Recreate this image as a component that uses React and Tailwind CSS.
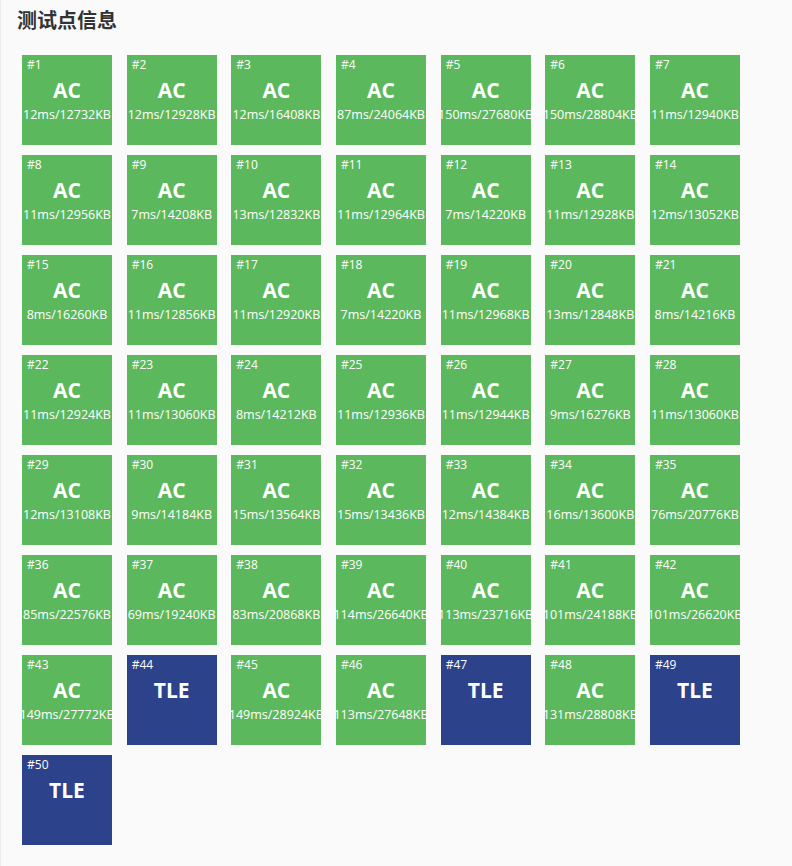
import React from 'react';

const tests = [
  ['AC', '12ms/12732KB'], ['AC', '12ms/12928KB'], ['AC', '12ms/16408KB'], ['AC', '87ms/24064KB'],
  ['AC', '150ms/27680KB'], ['AC', '150ms/28804KB'], ['AC', '11ms/12940KB'],
  ['AC', '11ms/12956KB'], ['AC', '7ms/14208KB'], ['AC', '13ms/12832KB'], ['AC', '11ms/12964KB'],
  ['AC', '7ms/14220KB'], ['AC', '11ms/12928KB'], ['AC', '12ms/13052KB'],
  ['AC', '8ms/16260KB'], ['AC', '11ms/12856KB'], ['AC', '11ms/12920KB'], ['AC', '7ms/14220KB'],
  ['AC', '11ms/12968KB'], ['AC', '13ms/12848KB'], ['AC', '8ms/14216KB'],
  ['AC', '11ms/12924KB'], ['AC', '11ms/13060KB'], ['AC', '8ms/14212KB'], ['AC', '11ms/12936KB'],
  ['AC', '11ms/12944KB'], ['AC', '9ms/16276KB'], ['AC', '11ms/13060KB'],
  ['AC', '12ms/13108KB'], ['AC', '9ms/14184KB'], ['AC', '15ms/13564KB'], ['AC', '15ms/13436KB'],
  ['AC', '12ms/14384KB'], ['AC', '16ms/13600KB'], ['AC', '76ms/20776KB'],
  ['AC', '85ms/22576KB'], ['AC', '69ms/19240KB'], ['AC', '83ms/20868KB'], ['AC', '114ms/26640KB'],
  ['AC', '113ms/23716KB'], ['AC', '101ms/24188KB'], ['AC', '101ms/26620KB'],
  ['AC', '149ms/27772KB'], ['TLE', ''], ['AC', '149ms/28924KB'], ['AC', '113ms/27648KB'],
  ['TLE', ''], ['AC', '131ms/28808KB'], ['TLE', ''],
  ['TLE', ''],
];

const Tile = ({ index, status, info }) => {
  const bg = status === 'AC' ? 'bg-[#5cb85c]' : 'bg-[#2c428a]';
  return (
    <div className={`${bg} w-[90px] h-[90px] flex flex-col text-white overflow-hidden`}>
      <div className="text-[12px] leading-[14px] pl-[5px] pt-[3px]">#{index}</div>
      <div className="text-[21px] leading-[24px] font-bold text-center mt-[6px]">{status}</div>
      {info && (
        <div className="text-[12.5px] leading-[16px] text-center mt-[5px] whitespace-nowrap -mx-[10px]">{info}</div>
      )}
    </div>
  );
};

const App = () => {
  return (
    <div
      className="min-h-[866px] bg-[#fafafa] border-l border-[#ececec]"
      style={{ fontFamily: '"Open Sans", "Noto Sans", "Noto Sans CJK SC", sans-serif' }}
    >
      <div className="pl-[16px] pt-[7px]">
        <h2 className="text-[20px] leading-[26px] font-bold text-[#333]" style={{ fontFamily: '"Noto Sans CJK SC", sans-serif' }}>
          测试点信息
        </h2>
      </div>
      <div className="pl-[21px] pt-[22px] grid grid-cols-[repeat(7,90px)] gap-x-[14.67px] gap-y-[10px]">
        {tests.map(([status, info], i) => (
          <Tile key={i} index={i + 1} status={status} info={info} />
        ))}
      </div>
    </div>
  );
};

export default App;
